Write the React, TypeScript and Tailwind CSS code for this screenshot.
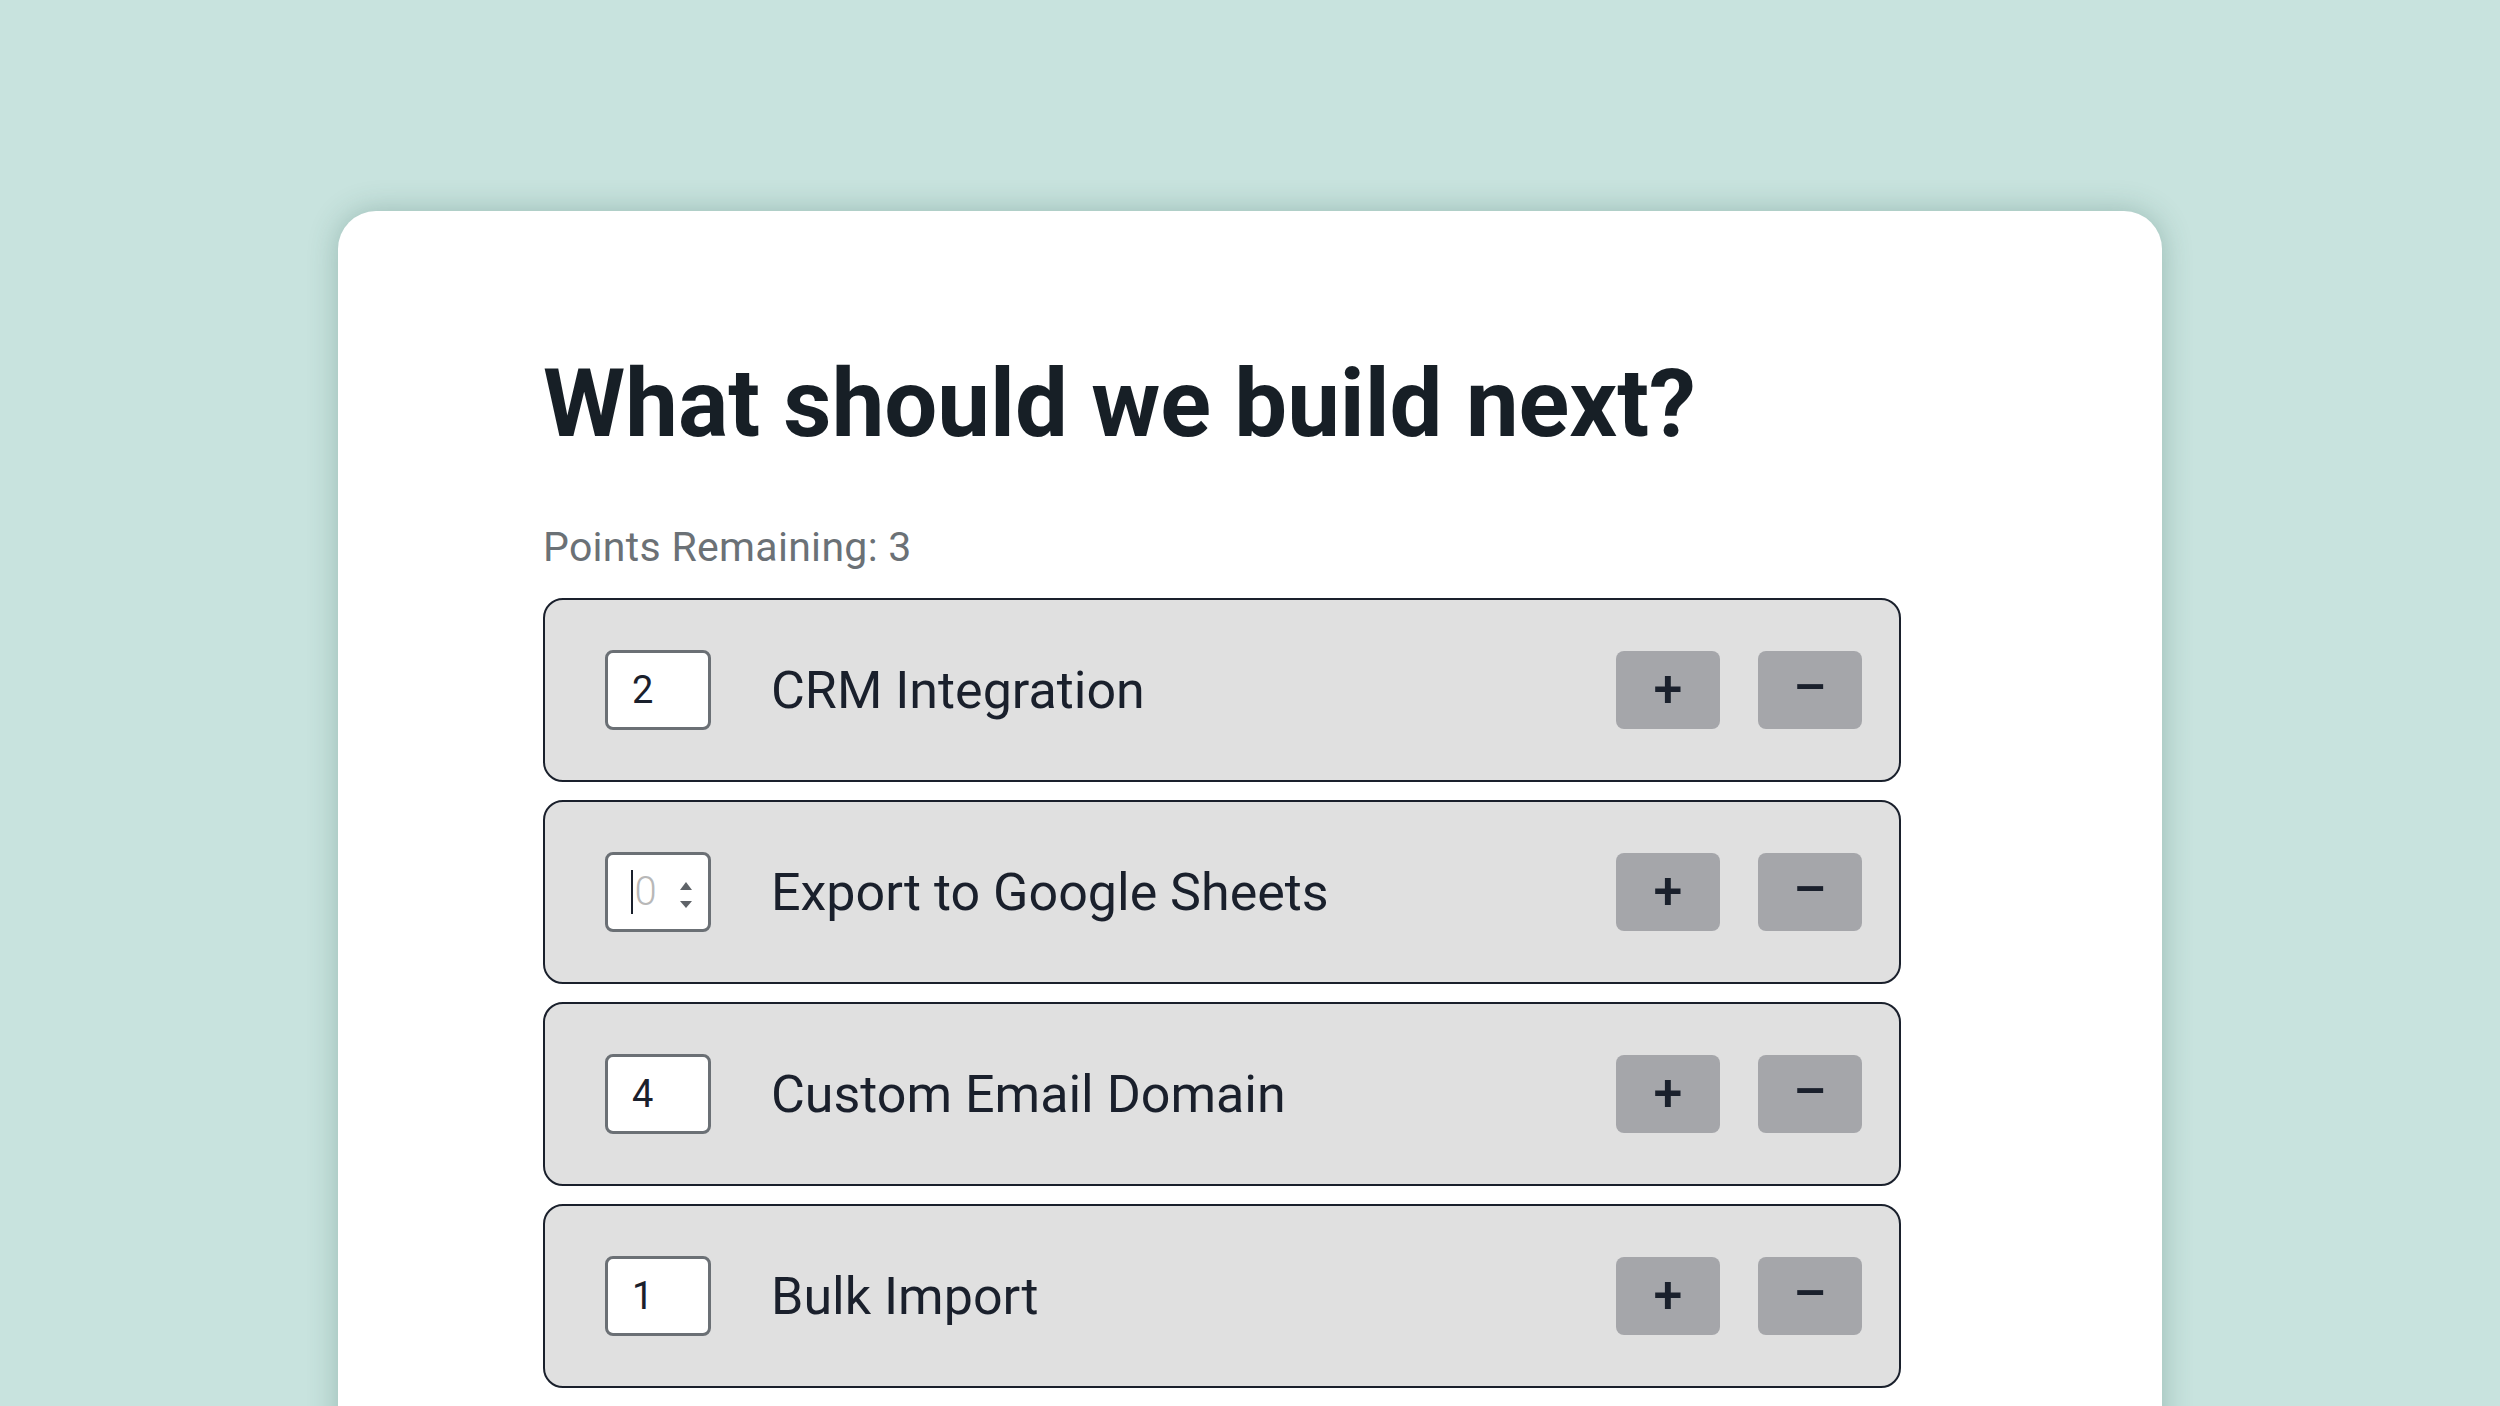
import React from "react";

const rows = [
  { value: "2", label: "CRM Integration" },
  { value: "", label: "Export to Google Sheets", focused: true },
  { value: "4", label: "Custom Email Domain" },
  { value: "1", label: "Bulk Import" },
];

function NumberBox({ value, focused }: { value: string; focused?: boolean }) {
  if (focused) {
    return (
      <div className="relative flex h-[80px] w-[106px] shrink-0 items-center rounded-[8px] border-[3px] border-[#6b7075] bg-white pl-[23px]">
        <span className="h-[44px] w-[1.5px] bg-[#1a202c]" />
        <span className="ml-[2px] text-[40px] font-light leading-none text-[#b8b8b8]">0</span>
        <svg className="absolute left-[72px] top-[27px]" width="12" height="26" viewBox="0 0 12 26">
          <path d="M6 0 L12 8 L0 8 Z" fill="#5f6368" />
          <path d="M6 26 L12 19 L0 19 Z" fill="#5f6368" />
        </svg>
      </div>
    );
  }
  return (
    <div className="flex h-[80px] w-[106px] shrink-0 items-center rounded-[8px] border-[3px] border-[#6b7075] bg-white pl-[24px]">
      <span className="text-[38px] leading-none text-[#1a202c]">{value}</span>
    </div>
  );
}

export default function App() {
  return (
    <div
      className="h-[1406px] w-full overflow-hidden bg-[#c8e3de] pl-[338px] pt-[211px]"
      style={{ fontFamily: "Roboto, 'Noto Sans', sans-serif" }}
    >
      <div className="min-h-[1400px] w-[1824px] rounded-[38px] bg-white pl-[205px] pt-[137px] shadow-[0_0_30px_rgba(40,90,80,0.3)]">
        <h1 className="text-[94px] font-bold leading-[1.2] text-[#171f26]">
          What should we build next?
        </h1>
        <p className="mt-[56px] text-[41px] leading-[1.5] tracking-[0.3px] text-[#6b7176]">Points Remaining: 3</p>
        <div className="mt-[20px] flex flex-col gap-[18px]">
          {rows.map((r) => (
            <div
              key={r.label}
              className="flex h-[184px] w-[1358px] items-center rounded-[20px] border-2 border-[#1a202c] bg-[#e0e0e0] pl-[60px] pr-[37px]"
            >
              <NumberBox value={r.value} focused={r.focused} />
              <span className="ml-[60px] pt-[2px] text-[52px] leading-none text-[#1a202c]">{r.label}</span>
              <div className="ml-auto flex gap-[38px]">
                <button className="flex h-[78px] w-[104px] items-center justify-center rounded-[8px] bg-[#a5a6aa] text-[52px] font-medium leading-none text-[#1a202c]">
                  +
                </button>
                <button className="flex h-[78px] w-[104px] items-center justify-center rounded-[8px] bg-[#a5a6aa] pb-[4px] text-[52px] font-medium leading-none text-[#1a202c]">
                  –
                </button>
              </div>
            </div>
          ))}
        </div>
      </div>
    </div>
  );
}
